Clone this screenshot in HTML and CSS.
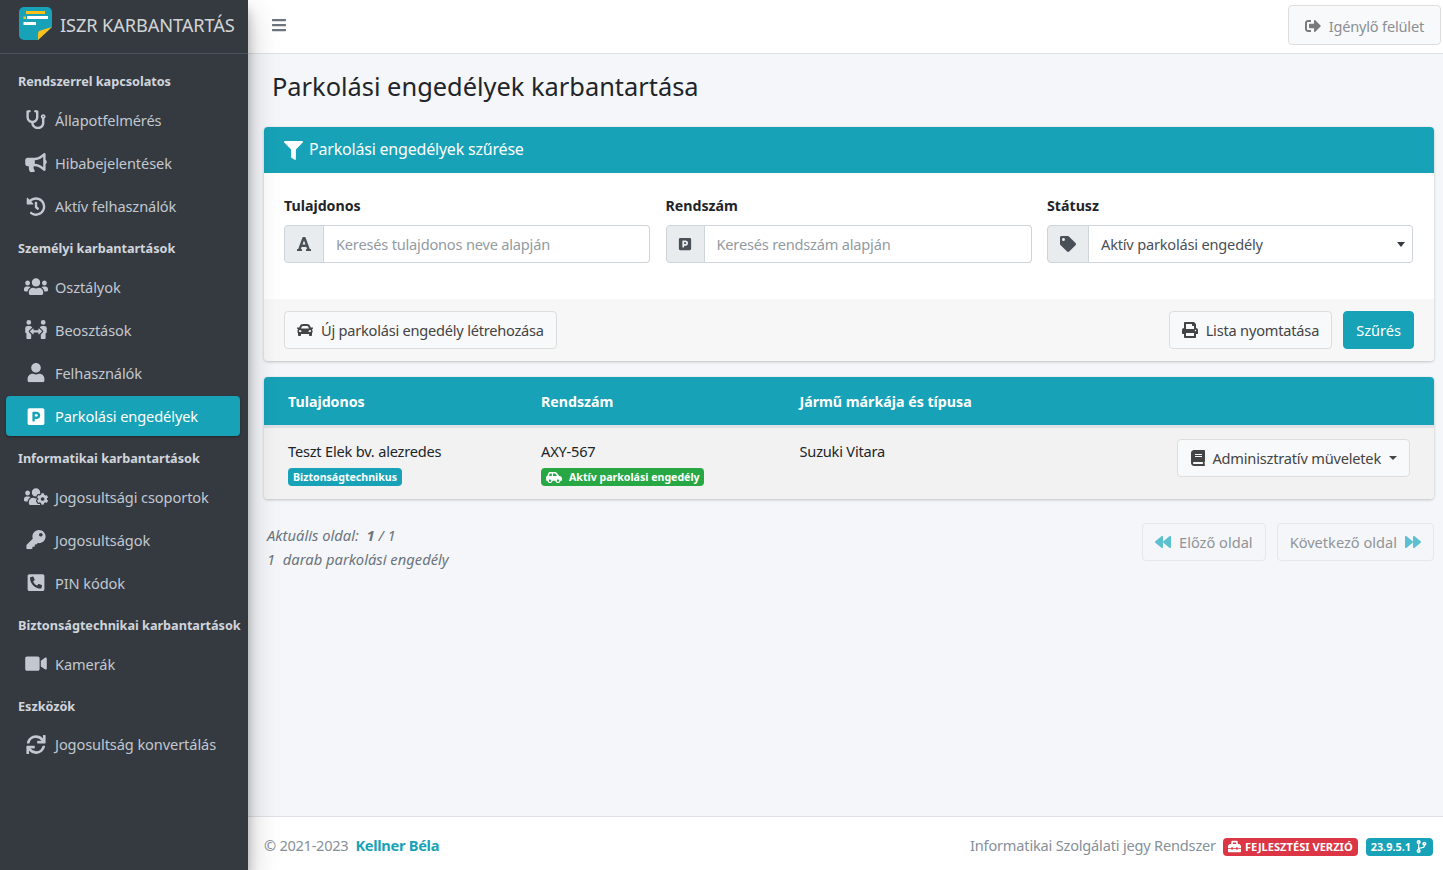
FILE: index.html
```html
<!DOCTYPE html>
<html lang="hu">
<head>
<meta charset="utf-8">
<title>Parkolási engedélyek karbantartása</title>
<link rel="stylesheet" href="styles.css">
</head>
<body>
<svg class="defs" xmlns="http://www.w3.org/2000/svg">
<symbol id="i-filter" viewBox="0 0 512 512"><path d="M487.976 0H24.028C2.71 0-8.047 25.866 7.058 40.971L192 225.941V432c0 7.831 3.821 15.17 10.237 19.662l80 55.98C298.02 518.69 320 507.493 320 487.98V225.941l184.947-184.97C520.021 25.896 509.338 0 487.976 0z"/></symbol>
<symbol id="i-bars" viewBox="0 0 448 512"><path d="M16 132h416c8.837 0 16-7.163 16-16V76c0-8.837-7.163-16-16-16H16C7.163 60 0 67.163 0 76v40c0 8.837 7.163 16 16 16zm0 160h416c8.837 0 16-7.163 16-16v-40c0-8.837-7.163-16-16-16H16c-8.837 0-16 7.163-16 16v40c0 8.837 7.163 16 16 16zm0 160h416c8.837 0 16-7.163 16-16v-40c0-8.837-7.163-16-16-16H16c-8.837 0-16 7.163-16 16v40c0 8.837 7.163 16 16 16z"/></symbol>
<symbol id="i-user" viewBox="0 0 448 512"><path d="M224 256c70.7 0 128-57.3 128-128S294.7 0 224 0 96 57.3 96 128s57.3 128 128 128zm89.6 32h-16.7c-22.2 10.2-46.9 16-72.9 16s-50.6-5.8-72.9-16h-16.7C60.2 288 0 348.2 0 422.4V464c0 26.5 21.5 48 48 48h352c26.5 0 48-21.5 48-48v-41.6c0-74.2-60.2-134.4-134.4-134.4z"/></symbol>
<symbol id="i-users" viewBox="0 0 640 512"><path d="M96 224c35.3 0 64-28.7 64-64s-28.7-64-64-64-64 28.7-64 64 28.7 64 64 64zm448 0c35.3 0 64-28.7 64-64s-28.7-64-64-64-64 28.7-64 64 28.7 64 64 64zm32 32h-64c-17.6 0-33.5 7.1-45.1 18.6 40.3 22.1 68.9 62 75.1 109.4h66c17.7 0 32-14.3 32-32v-32c0-35.3-28.7-64-64-64zm-256 0c61.9 0 112-50.1 112-112S381.9 32 320 32 208 82.1 208 144s50.1 112 112 112zm76.8 32h-8.3c-20.8 10-43.9 16-68.5 16s-47.6-6-68.5-16h-8.3C179.6 288 128 339.6 128 403.2V432c0 26.5 21.5 48 48 48h288c26.5 0 48-21.5 48-48v-28.8c0-63.6-51.6-115.2-115.2-115.2zm-223.7-13.4C161.5 263.1 145.6 256 128 256H64c-35.3 0-64 28.7-64 64v32c0 17.7 14.3 32 32 32h65.9c6.3-47.4 34.9-87.3 75.2-109.4z"/></symbol>
<symbol id="i-key" viewBox="0 0 512 512"><path d="M512 176.001C512 273.203 433.202 352 336 352c-11.22 0-22.19-1.062-32.827-3.069l-24.012 27.014A23.999 23.999 0 0 1 261.223 384H224v40c0 13.255-10.745 24-24 24h-40v40c0 13.255-10.745 24-24 24H24c-13.255 0-24-10.745-24-24v-78.059c0-6.365 2.529-12.47 7.029-16.971l161.802-161.802C163.108 213.814 160 195.271 160 176 160 78.798 238.797.001 335.999 0 433.488-.001 512 78.511 512 176.001zM336 128c0 26.51 21.49 48 48 48s48-21.49 48-48-21.49-48-48-48-48 21.49-48 48z"/></symbol>
<symbol id="i-phone" viewBox="0 0 448 512"><g transform="matrix(-1 0 0 1 448 0)"><path d="M400 32H48C21.49 32 0 53.49 0 80v352c0 26.51 21.49 48 48 48h352c26.51 0 48-21.49 48-48V80c0-26.51-21.49-48-48-48zM94 416c-7.033 0-13.057-4.873-14.616-11.627l-14.998-65a15 15 0 0 1 8.707-17.16l69.998-29.999a15 15 0 0 1 17.518 4.289l30.997 37.885c48.944-22.963 88.297-62.858 110.781-110.78l-37.886-30.997a15.001 15.001 0 0 1-4.289-17.518l30-69.998a15.001 15.001 0 0 1 17.16-8.707l65 14.998A14.997 14.997 0 0 1 384 126c0 160.292-129.945 290-290 290z"/></g></symbol>
<symbol id="i-video" viewBox="0 0 576 512"><path d="M336.2 64H47.8C21.4 64 0 85.4 0 111.8v288.4C0 426.6 21.4 448 47.8 448h288.4c26.4 0 47.8-21.4 47.8-47.8V111.8c0-26.4-21.4-47.8-47.8-47.8zm189.4 37.7L416 177.3v157.4l109.6 75.5c21.2 14.6 50.4-.3 50.4-25.8V127.5c0-25.4-29.1-40.4-50.4-25.8z"/></symbol>
<symbol id="i-sync" viewBox="0 0 512 512"><path d="M440.65 12.57l4 82.77A247.16 247.16 0 0 0 255.83 8C134.73 8 33.91 94.92 12.29 209.82A12 12 0 0 0 24.09 224h49.05a12 12 0 0 0 11.67-9.26 175.91 175.91 0 0 1 317-56.94l-101.46-4.86a12 12 0 0 0-12.57 12v47.41a12 12 0 0 0 12 12H500a12 12 0 0 0 12-12V12a12 12 0 0 0-12-12h-47.37a12 12 0 0 0-11.98 12.57zM255.83 432a175.61 175.61 0 0 1-146-77.8l101.8 4.87a12 12 0 0 0 12.57-12v-47.4a12 12 0 0 0-12-12H12a12 12 0 0 0-12 12V500a12 12 0 0 0 12 12h47.35a12 12 0 0 0 12-12.6l-4.15-82.57A247.17 247.17 0 0 0 255.83 504c121.11 0 221.93-86.92 243.55-201.82a12 12 0 0 0-11.8-14.18h-49.05a12 12 0 0 0-11.67 9.26A175.86 175.86 0 0 1 255.83 432z"/></symbol>
<symbol id="i-car" viewBox="0 0 512 512"><path d="M499.99 176h-59.87l-16.64-41.6C406.38 91.63 365.57 64 319.5 64h-127c-46.06 0-86.88 27.63-103.99 70.4L71.87 176H12.01C4.2 176-1.53 183.34.37 190.91l6 24C7.7 220.25 12.5 224 18.01 224h20.07C24.65 235.73 16 252.78 16 272v48c0 16.12 6.16 30.67 16 41.93V416c0 17.67 14.33 32 32 32h32c17.67 0 32-14.33 32-32v-32h256v32c0 17.67 14.33 32 32 32h32c17.67 0 32-14.33 32-32v-54.07c9.84-11.25 16-25.8 16-41.93v-48c0-19.22-8.65-36.27-22.07-48H494c5.51 0 10.31-3.75 11.64-9.09l6-24c1.89-7.57-3.84-14.91-11.65-14.91zm-352.06-17.83c7.29-18.22 24.94-30.17 44.57-30.17h127c19.63 0 37.28 11.95 44.57 30.17L384 208H128l19.93-49.83zM96 319.8c-19.2 0-32-12.76-32-31.9S76.8 256 96 256s48 28.71 48 47.85-28.8 15.95-48 15.95zm320 0c-19.2 0-48 3.19-48-15.95S396.8 256 416 256s32 12.76 32 31.9-12.8 31.9-32 31.9z"/></symbol>
<symbol id="i-carside" viewBox="0 0 640 512"><path d="M544 192h-16L419.22 56.02A64.025 64.025 0 0 0 369.24 32H155.33c-26.17 0-49.7 15.93-59.42 40.23L48 194.26C20.44 201.4 0 226.21 0 256v112c0 8.84 7.16 16 16 16h48c0 53.02 42.98 96 96 96s96-42.98 96-96h128c0 53.02 42.98 96 96 96s96-42.98 96-96h48c8.84 0 16-7.16 16-16v-80c0-53.02-42.98-96-96-96zM160 432c-26.47 0-48-21.53-48-48s21.53-48 48-48 48 21.53 48 48-21.53 48-48 48zm72-240H116.93l38.4-96H232v96zm48 0V96h89.24l76.8 96H280zm200 240c-26.47 0-48-21.53-48-48s21.53-48 48-48 48 21.53 48 48-21.53 48-48 48z"/></symbol>
<symbol id="i-print" viewBox="0 0 512 512"><path d="M448 192V77.25c0-8.49-3.37-16.62-9.37-22.63L393.37 9.37c-6-6-14.14-9.37-22.63-9.37H96C78.33 0 64 14.33 64 32v160c-35.35 0-64 28.65-64 64v112c0 8.84 7.16 16 16 16h48v96c0 17.67 14.33 32 32 32h320c17.67 0 32-14.33 32-32v-96h48c8.84 0 16-7.16 16-16V256c0-35.35-28.65-64-64-64zm-64 256H128v-96h256v96zm0-224H128V64h192v48c0 8.84 7.16 16 16 16h48v96zm48 72c-13.25 0-24-10.75-24-24 0-13.26 10.75-24 24-24s24 10.74 24 24c0 13.25-10.75 24-24 24z"/></symbol>
<symbol id="i-tag" viewBox="0 0 512 512"><path d="M0 252.118V48C0 21.49 21.49 0 48 0h204.118a48 48 0 0 1 33.941 14.059l211.882 211.882c18.745 18.745 18.745 49.137 0 67.882L293.823 497.941c-18.745 18.745-49.137 18.745-67.882 0L14.059 286.059A48 48 0 0 1 0 252.118zM112 64c-26.51 0-48 21.49-48 48s21.49 48 48 48 48-21.49 48-48-21.49-48-48-48z"/></symbol>
<symbol id="i-font" viewBox="0 0 448 512"><path d="M432 416h-23.41L277.88 53.69A32 32 0 0 0 247.58 32h-47.16a32 32 0 0 0-30.3 21.69L39.41 416H16a16 16 0 0 0-16 16v32a16 16 0 0 0 16 16h128a16 16 0 0 0 16-16v-32a16 16 0 0 0-16-16h-19.58l23.3-64h152.56l23.3 64H304a16 16 0 0 0-16 16v32a16 16 0 0 0 16 16h128a16 16 0 0 0 16-16v-32a16 16 0 0 0-16-16zM176.85 272L224 142.51 271.15 272z"/></symbol>
<symbol id="i-parking" viewBox="0 0 448 512"><path d="M400 32H48C21.5 32 0 53.5 0 80v352c0 26.5 21.5 48 48 48h352c26.5 0 48-21.5 48-48V80c0-26.5-21.5-48-48-48zM240 320h-48v48c0 8.8-7.2 16-16 16h-32c-8.8 0-16-7.2-16-16V144c0-8.8 7.2-16 16-16h96c52.9 0 96 43.1 96 96s-43.1 96-96 96zm0-128h-48v64h48c17.6 0 32-14.4 32-32s-14.4-32-32-32z"/></symbol>
<symbol id="i-book" viewBox="0 0 448 512"><path d="M448 360V24c0-13.3-10.7-24-24-24H96C43 0 0 43 0 96v320c0 53 43 96 96 96h328c13.3 0 24-10.7 24-24v-16c0-7.5-3.5-14.3-8.9-18.7-4.2-15.4-4.2-59.3 0-74.7 5.4-4.3 8.9-11.1 8.9-18.6zM128 134c0-3.3 2.7-6 6-6h212c3.3 0 6 2.7 6 6v20c0 3.3-2.7 6-6 6H134c-3.3 0-6-2.7-6-6v-20zm0 64c0-3.3 2.7-6 6-6h212c3.3 0 6 2.7 6 6v20c0 3.3-2.7 6-6 6H134c-3.3 0-6-2.7-6-6v-20zm253.4 250H96c-17.7 0-32-14.3-32-32 0-17.6 14.4-32 32-32h285.4c-1.9 17.1-1.9 46.9 0 64z"/></symbol>
<symbol id="i-backward" viewBox="0 0 512 512"><path d="M11.5 280.6l192 160c20.6 17.2 52.5 2.8 52.5-24.6V96c0-27.4-31.9-41.8-52.5-24.6l-192 160c-15.3 12.8-15.3 36.4 0 49.2zm256 0l192 160c20.6 17.2 52.5 2.8 52.5-24.6V96c0-27.4-31.9-41.8-52.5-24.6l-192 160c-15.3 12.8-15.3 36.4 0 49.2z"/></symbol>
<symbol id="i-forward" viewBox="0 0 512 512"><path d="M500.5 231.4l-192-160C287.9 54.3 256 68.6 256 96v320c0 27.4 31.9 41.8 52.5 24.6l192-160c15.3-12.8 15.3-36.4 0-49.2zm-256 0l-192-160C31.9 54.3 0 68.6 0 96v320c0 27.4 31.9 41.8 52.5 24.6l192-160c15.3-12.8 15.3-36.4 0-49.2z"/></symbol>
<symbol id="i-signout" viewBox="0 0 512 512"><path d="M497 273L329 441c-15 15-41 4.5-41-17v-96H152c-13.3 0-24-10.7-24-24v-96c0-13.3 10.7-24 24-24h136V88c0-21.4 25.9-32 41-17l168 168c9.3 9.4 9.3 24.6 0 34zM192 436v-40c0-6.6-5.4-12-12-12H96c-17.7 0-32-14.3-32-32V160c0-17.7 14.3-32 32-32h84c6.6 0 12-5.4 12-12V76c0-6.6-5.4-12-12-12H96c-53 0-96 43-96 96v192c0 53 43 96 96 96h84c6.6 0 12-5.4 12-12z"/></symbol>
<symbol id="i-bullhorn" viewBox="0 0 576 512"><path d="M576 240c0-23.63-12.95-44.04-32-55.12V32.01C544 23.26 537.02 0 512 0c-7.12 0-14.19 2.38-19.98 7.02l-85.03 68.03C364.28 109.19 310.66 128 256 128H64c-35.35 0-64 28.65-64 64v96c0 35.35 28.65 64 64 64h33.7c-1.39 10.48-2.18 21.14-2.18 32 0 39.77 9.26 77.35 25.56 110.94 5.19 10.69 16.52 17.06 28.4 17.06h74.28c26.05 0 41.69-29.84 25.9-50.56-16.4-21.52-26.15-48.36-26.15-77.44 0-11.11 1.62-21.79 4.41-32H256c54.66 0 108.28 18.81 150.98 52.95l85.03 68.03a32.023 32.023 0 0 0 19.98 7.02c24.92 0 32-22.78 32-32V295.13C563.05 284.04 576 263.63 576 240zm-96 141.42l-33.05-26.44C392.95 311.78 325.12 288 256 288v-96c69.12 0 136.95-23.78 190.95-66.98L480 98.58v282.84z"/></symbol>
<symbol id="i-history" viewBox="0 0 512 512"><path d="M504 255.531c.253 136.64-111.18 248.372-247.82 248.468-59.015.042-113.223-20.53-155.822-54.911-11.077-8.94-11.905-25.541-1.839-35.607l11.267-11.267c8.609-8.609 22.353-9.551 31.891-1.984C173.062 425.135 212.781 440 256 440c101.705 0 184-82.311 184-184 0-101.705-82.311-184-184-184-48.814 0-93.149 18.969-126.068 49.932l50.754 50.754c10.08 10.08 2.941 27.314-11.313 27.314H24c-8.837 0-16-7.163-16-16V38.627c0-14.254 17.234-21.393 27.314-11.314l49.372 49.372C129.209 34.136 189.552 8 256 8c136.81 0 247.747 110.78 248 247.531zm-180.912 78.784l9.823-12.63c8.138-10.463 6.253-25.542-4.21-33.679L288 256.349V152c0-13.255-10.745-24-24-24h-16c-13.255 0-24 10.745-24 24v135.651l65.409 50.874c10.463 8.137 25.541 6.253 33.679-4.21z"/></symbol>
<symbol id="i-steth" viewBox="0 0 512 512"><path d="M447.1 112c-34.2.5-62.3 28.4-63 62.6-.5 24.3 12.5 45.6 32 56.8V344c0 57.3-50.2 104-112 104-60 0-109.2-44.1-111.9-99.2C265 333.8 320 269.2 320 192V36.6c0-11.4-8.1-21.3-19.3-23.5L237.8.5c-13-2.6-25.6 5.8-28.2 18.8L206.4 35c-2.6 13 5.8 25.6 18.8 28.2l30.7 6.1v121.4c0 52.9-42.2 96.7-95.1 97.2-53.4.5-96.9-42.7-96.9-96V69.4l30.7-6.1c13-2.6 21.4-15.2 18.8-28.2l-3.1-15.7C107.7 6.4 95.1-2 82.1.6L19.3 13C8.1 15.3 0 25.1 0 36.6V192c0 77.3 55.1 142 128.1 156.8C130.7 439.2 208.6 512 304 512c97 0 176-75.4 176-168V231.4c19.1-11.1 32-31.7 32-55.4 0-35.7-29.2-64.5-64.9-64zm.9 80c-8.8 0-16-7.2-16-16s7.2-16 16-16 16 7.2 16 16-7.2 16-16 16z"/></symbol>
<symbol id="i-toolbox" viewBox="0 0 512 512"><path d="M502.63 214.63l-45.25-45.25c-6-6-14.14-9.37-22.63-9.37H384V80c0-26.51-21.49-48-48-48H176c-26.51 0-48 21.49-48 48v80H77.25c-8.49 0-16.62 3.37-22.63 9.37L9.37 214.63c-6 6-9.37 14.14-9.37 22.63V320h128v-16c0-8.84 7.16-16 16-16h32c8.84 0 16 7.16 16 16v16h128v-16c0-8.84 7.16-16 16-16h32c8.84 0 16 7.16 16 16v16h128v-82.75c0-8.48-3.37-16.62-9.37-22.62zM320 160H192V96h128v64zm64 208c0 8.84-7.16 16-16 16h-32c-8.84 0-16-7.16-16-16v-16H192v16c0 8.84-7.16 16-16 16h-32c-8.84 0-16-7.16-16-16v-16H0v96c0 17.67 14.33 32 32 32h448c17.67 0 32-14.33 32-32v-96H384v16z"/></symbol>
<symbol id="i-branch" viewBox="0 0 384 512"><path d="M384 144c0-44.2-35.8-80-80-80s-80 35.8-80 80c0 36.4 24.3 67.1 57.5 76.8-.6 16.1-4.2 28.5-11 36.9-15.4 19.2-49.3 22.4-85.2 25.7-28.2 2.6-57.4 5.4-81.3 16.9v-144c32.5-10.2 56-40.5 56-76.3 0-44.2-35.8-80-80-80S0 35.8 0 80c0 35.8 23.5 66.1 56 76.3v199.3C23.5 365.9 0 396.2 0 432c0 44.2 35.8 80 80 80s80-35.8 80-80c0-34-21.2-63.1-51.2-74.6 3.1-5.2 7.8-9.8 14.9-13.4 16.2-8.2 40.4-10.4 66.1-12.8 42.2-3.9 90-8.4 118.2-43.4 14-17.4 21.1-39.8 21.6-67.9 31.6-10.8 54.4-40.7 54.4-75.9zM80 64c8.8 0 16 7.2 16 16s-7.2 16-16 16-16-7.2-16-16 7.2-16 16-16zm0 384c-8.8 0-16-7.2-16-16s7.2-16 16-16 16 7.2 16 16-7.2 16-16 16zm224-320c8.8 0 16 7.2 16 16s-7.2 16-16 16-16-7.2-16-16 7.2-16 16-16z"/></symbol>
<symbol id="i-arrows" viewBox="0 0 576 512"><path d="M96,128A64,64,0,1,0,32,64,64,64,0,0,0,96,128Zm0,176.08a44.11,44.11,0,0,1,13.64-32L181.77,204c1.65-1.55,3.77-2.31,5.61-3.57A63.91,63.91,0,0,0,128,160H64A64,64,0,0,0,0,224v96a32,32,0,0,0,32,32V480a32,32,0,0,0,32,32h64a32,32,0,0,0,32-32V383.61l-50.36-47.53A44.08,44.08,0,0,1,96,304.08ZM480,128a64,64,0,1,0-64-64A64,64,0,0,0,480,128Zm32,32H448a63.91,63.91,0,0,0-59.38,40.42c1.84,1.27,4,2,5.62,3.59l72.12,68.06a44.37,44.37,0,0,1,0,64L416,383.62V480a32,32,0,0,0,32,32h64a32,32,0,0,0,32-32V352a32,32,0,0,0,32-32V224A64,64,0,0,0,512,160ZM444.4,295.34l-72.12-68.06A12,12,0,0,0,352,236v36H224V236a12,12,0,0,0-20.28-8.73L131.6,295.34a12.4,12.4,0,0,0,0,17.47l72.12,68.07A12,12,0,0,0,224,372.14V336H352v36.14a12,12,0,0,0,20.28,8.74l72.12-68.07A12.4,12.4,0,0,0,444.4,295.34Z"/></symbol>
<symbol id="i-userscog" viewBox="0 0 640 512"><path d="M610.5 341.3c2.6-14.1 2.6-28.5 0-42.6l25.8-14.9c3-1.7 4.3-5.2 3.3-8.5-6.7-21.6-18.2-41.2-33.2-57.4-2.3-2.5-6-3.1-9-1.4l-25.8 14.9c-10.9-9.3-23.4-16.5-36.9-21.3v-29.8c0-3.4-2.4-6.4-5.7-7.1-22.3-5-45-4.8-66.2 0-3.3.7-5.7 3.7-5.7 7.1v29.8c-13.5 4.8-26 12-36.9 21.3l-25.8-14.9c-2.9-1.7-6.7-1.1-9 1.4-15 16.2-26.5 35.8-33.2 57.4-1 3.3.4 6.8 3.3 8.5l25.8 14.9c-2.6 14.1-2.6 28.5 0 42.6l-25.8 14.9c-3 1.7-4.3 5.2-3.3 8.5 6.7 21.6 18.2 41.1 33.2 57.4 2.3 2.5 6 3.1 9 1.4l25.8-14.9c10.9 9.3 23.4 16.5 36.9 21.3v29.8c0 3.4 2.4 6.4 5.7 7.1 22.3 5 45 4.8 66.2 0 3.3-.7 5.7-3.7 5.7-7.1v-29.8c13.5-4.8 26-12 36.9-21.3l25.8 14.9c2.9 1.7 6.7 1.1 9-1.4 15-16.2 26.5-35.8 33.2-57.4 1-3.3-.4-6.8-3.3-8.5l-25.8-14.9zM496 368.5c-26.8 0-48.5-21.8-48.5-48.5s21.8-48.5 48.5-48.5 48.5 21.8 48.5 48.5-21.7 48.5-48.5 48.5zM96 224c35.3 0 64-28.7 64-64s-28.7-64-64-64-64 28.7-64 64 28.7 64 64 64zm224 32c1.9 0 3.7-.5 5.6-.6 8.3-21.7 20.5-42.1 36.3-59.2 7.4-8 17.9-12.6 28.9-12.6 6.9 0 13.7 1.8 19.6 5.3l7.9 4.6c.8-.5 1.6-.9 2.4-1.4 7-14.6 11.2-30.8 11.2-48 0-61.9-50.1-112-112-112S208 82.1 208 144c0 61.9 50.1 112 112 112zm105.2 194.5c-2.3-1.2-4.6-2.6-6.8-3.9-8.2 4.8-15.3 9.8-27.5 9.8-10.9 0-21.4-4.6-28.9-12.6-18.3-19.8-32.3-43.9-40.2-69.6-10.7-34.5 24.9-49.7 25.8-50.3-.1-2.6-.1-5.2 0-7.8l-7.9-4.6c-3.8-2.2-7-5-9.8-8.1-3.3.2-6.5.6-9.8.6-24.6 0-47.6-6-68.5-16h-8.3C179.6 288 128 339.6 128 403.2V432c0 26.5 21.5 48 48 48h255.4c-3.7-6-6.2-12.8-6.2-20.3v-9.2zM173.1 274.6C161.5 263.1 145.6 256 128 256H64c-35.3 0-64 28.7-64 64v32c0 17.7 14.3 32 32 32h65.9c6.3-47.4 34.9-87.3 75.2-109.4z"/></symbol>
</svg>

<aside class="sidebar">
  <a class="brand" href="#">
    <svg class="logo" viewBox="0 0 33 33" xmlns="http://www.w3.org/2000/svg">
      <path d="M5 0h23a5 5 0 0 1 5 5v15L19 33H5a5 5 0 0 1-5-5V5a5 5 0 0 1 5-5z" fill="#17a2b8"/>
      <path d="M33 20L19 33V26.500Q19 24 21.500 23.400Z" fill="#fdbf1c"/>
      <rect x="7" y="4" width="19" height="3" fill="#fdbf1c"/>
      <rect x="8" y="9" width="21" height="3" fill="#fff"/>
      <rect x="4.500" y="9.500" width="2.500" height="2.500" fill="#fdbf1c"/>
      <rect x="4.500" y="15" width="12.500" height="3" fill="#fff"/>
    </svg>
    <span class="brand-text">ISZR KARBANTARTÁS</span>
  </a>
  <nav class="nav">
    <div class="nav-header">Rendszerrel kapcsolatos</div>
    <a class="nav-link" href="#"><span class="nav-icon"><svg class="ic-nav"><use href="#i-steth"/></svg></span><span>Állapotfelmérés</span></a>
    <a class="nav-link" href="#"><span class="nav-icon"><svg class="ic-nav"><use href="#i-bullhorn"/></svg></span><span>Hibabejelentések</span></a>
    <a class="nav-link" href="#"><span class="nav-icon"><svg class="ic-nav"><use href="#i-history"/></svg></span><span>Aktív felhasználók</span></a>
    <div class="nav-header">Személyi karbantartások</div>
    <a class="nav-link" href="#"><span class="nav-icon"><svg class="ic-nav"><use href="#i-users"/></svg></span><span>Osztályok</span></a>
    <a class="nav-link" href="#"><span class="nav-icon"><svg class="ic-nav"><use href="#i-arrows"/></svg></span><span>Beosztások</span></a>
    <a class="nav-link" href="#"><span class="nav-icon"><svg class="ic-nav"><use href="#i-user"/></svg></span><span>Felhasználók</span></a>
    <a class="nav-link active" href="#"><span class="nav-icon"><svg class="ic-nav"><use href="#i-parking"/></svg></span><span>Parkolási engedélyek</span></a>
    <div class="nav-header">Informatikai karbantartások</div>
    <a class="nav-link" href="#"><span class="nav-icon"><svg class="ic-nav"><use href="#i-userscog"/></svg></span><span>Jogosultsági csoportok</span></a>
    <a class="nav-link" href="#"><span class="nav-icon"><svg class="ic-nav"><use href="#i-key"/></svg></span><span>Jogosultságok</span></a>
    <a class="nav-link" href="#"><span class="nav-icon"><svg class="ic-nav"><use href="#i-phone"/></svg></span><span>PIN kódok</span></a>
    <div class="nav-header">Biztonságtechnikai karbantartások</div>
    <a class="nav-link" href="#"><span class="nav-icon"><svg class="ic-nav"><use href="#i-video"/></svg></span><span>Kamerák</span></a>
    <div class="nav-header">Eszközök</div>
    <a class="nav-link" href="#"><span class="nav-icon"><svg class="ic-nav"><use href="#i-sync"/></svg></span><span>Jogosultság konvertálás</span></a>
  </nav>
</aside>

<div class="wrapper">
  <header class="topbar">
    <a class="burger" href="#"><svg class="ic-16"><use href="#i-bars"/></svg></a>
    <a class="btn btn-top" href="#"><svg class="ic-16"><use href="#i-signout"/></svg><span>Igénylő felület</span></a>
  </header>

  <main class="content">
    <h1 class="page-title">Parkolási engedélyek karbantartása</h1>

    <section class="card">
      <div class="card-head"><svg class="ic-19"><use href="#i-filter"/></svg><span class="card-title">Parkolási engedélyek szűrése</span></div>
      <div class="card-body">
        <div class="field">
          <label class="field-label">Tulajdonos</label>
          <div class="input-group">
            <span class="addon"><svg class="ic-16"><use href="#i-font"/></svg></span>
            <input class="control" type="text" placeholder="Keresés tulajdonos neve alapján">
          </div>
        </div>
        <div class="field">
          <label class="field-label">Rendszám</label>
          <div class="input-group">
            <span class="addon addon-p"><svg class="ic-14"><use href="#i-parking"/></svg></span>
            <input class="control" type="text" placeholder="Keresés rendszám alapján">
          </div>
        </div>
        <div class="field">
          <label class="field-label">Státusz</label>
          <div class="input-group">
            <span class="addon addon-tag"><svg class="ic-16"><use href="#i-tag"/></svg></span>
            <div class="select-wrap">
              <select class="control select"><option>Aktív parkolási engedély</option></select>
            </div>
          </div>
        </div>
      </div>
      <div class="card-foot">
        <a class="btn btn-new" href="#"><svg class="ic-16"><use href="#i-car"/></svg><span>Új parkolási engedély létrehozása</span></a>
        <div class="foot-actions">
          <a class="btn" href="#"><svg class="ic-16"><use href="#i-print"/></svg><span>Lista nyomtatása</span></a>
          <a class="btn btn-info" href="#">Szűrés</a>
        </div>
      </div>
    </section>

    <section class="card">
      <table class="table">
        <thead>
          <tr><th class="col-a">Tulajdonos</th><th class="col-b">Rendszám</th><th>Jármű márkája és típusa</th><th class="col-d"></th></tr>
        </thead>
        <tbody>
          <tr>
            <td>
              <div class="cell-text">Teszt Elek bv. alezredes</div>
              <span class="badge badge-info">Biztonságtechnikus</span>
            </td>
            <td>
              <div class="cell-text">AXY-567</div>
              <span class="badge badge-success"><svg class="ic-carside"><use href="#i-carside"/></svg>Aktív parkolási engedély</span>
            </td>
            <td><div class="cell-text">Suzuki Vitara</div></td>
            <td class="cell-right"><a class="btn btn-drop" href="#"><svg class="ic-16"><use href="#i-book"/></svg><span>Adminisztratív müveletek</span><i class="caret"></i></a></td>
          </tr>
        </tbody>
      </table>
    </section>

    <div class="pager">
      <div class="pager-info">
        <div>Aktuális oldal:&nbsp; <b>1</b> / 1</div>
        <div>1&nbsp; darab parkolási engedély</div>
      </div>
      <div class="pager-btns">
        <a class="btn btn-off" href="#"><svg class="ic-16 teal"><use href="#i-backward"/></svg><span>Előző oldal</span></a>
        <a class="btn btn-off" href="#"><span>Következő oldal</span><svg class="ic-16 teal"><use href="#i-forward"/></svg></a>
      </div>
    </div>
  </main>

  <footer class="footer">
    <div class="copy">© 2021-2023&nbsp; <a class="author" href="#">Kellner Béla</a></div>
    <div class="footer-right">
      <span>Informatikai Szolgálati jegy Rendszer</span>
      <span class="badge badge-danger"><svg class="ic-13"><use href="#i-toolbox"/></svg>FEJLESZTÉSI VERZIÓ</span>
      <span class="badge badge-info badge-ver">23.9.5.1<svg class="ic-13"><use href="#i-branch"/></svg></span>
    </div>
  </footer>
</div>
</body>
</html>
```

FILE: styles.css
```css
* { box-sizing: border-box; }
html, body { height: 100%; }
body {
  margin: 0;
  display: flex;
  height: 870px;
  overflow: hidden;
  background: #f4f6f9;
  color: #212529;
  font-family: "Noto Sans", "Open Sans", sans-serif;
  font-size: 14.6px;
  line-height: 24px;
  letter-spacing: -.2px;
}
a { text-decoration: none; color: inherit; }
svg { fill: currentColor; flex: none; display: block; }
.defs { display: none; }
.ic-13 { width: 13px; height: 13px; }
.ic-14 { width: 14px; height: 14px; }
.ic-16 { width: 16px; height: 16px; }
.ic-19 { width: 19px; height: 19px; }
.ic-nav { width: 24px; height: 19.200px; }
.ic-carside { width: 16px; height: 13px; }

.sidebar {
  width: 248px;
  flex: none;
  background: #343a40;
  box-shadow: 0 14px 28px rgba(0,0,0,.25), 0 10px 10px rgba(0,0,0,.22);
  position: relative;
  z-index: 2;
}
.brand {
  display: flex;
  align-items: center;
  height: 54px;
  padding: 0 0 6px 19px;
  border-bottom: 1px solid #4b545c;
}
.logo { width: 33px; height: 33px; }
.brand-text {
  margin: 2px 0 0 8px;
  font-size: 18.200px;
  letter-spacing: -.1px;
  color: rgba(255,255,255,.8);
  white-space: nowrap;
}
.nav { padding: 8.400px 8px 0 6px; }
.nav-header {
  height: 37.600px;
  display: flex;
  align-items: center;
  padding-left: 12px;
  font-size: 12.700px;
  font-weight: 700;
  letter-spacing: -.03px;
  color: #d0d4db;
  white-space: nowrap;
}
.nav-link {
  display: flex;
  align-items: center;
  height: 40px;
  margin-bottom: 3.100px;
  border-radius: 4px;
  color: #c2c7d0;
  letter-spacing: -.1px;
}
.nav-icon {
  width: 49px;
  padding: 0 7px 0 18px;
  height: 24px;
  display: flex;
  align-items: center;
  justify-content: center;
}
.nav-link.active {
  background: #17a2b8;
  color: #fff;
  box-shadow: 0 1px 3px rgba(0,0,0,.12), 0 1px 2px rgba(0,0,0,.24);
}

.wrapper {
  flex: 1;
  min-width: 0;
  display: flex;
  flex-direction: column;
}
.topbar {
  height: 54px;
  flex: none;
  display: flex;
  align-items: center;
  justify-content: space-between;
  padding: 0 2px 4px 23px;
  background: #fff;
  border-bottom: 1px solid #dee2e6;
}
.burger { color: #6c757d; display: flex; }
.content {
  flex: 1;
  padding: 0 9px 0 16px;
}
.page-title {
  margin: 0;
  height: 73px;
  padding: 13px 0 0 8px;
  font-size: 25.400px;
  font-weight: 400;
  line-height: 38px;
  letter-spacing: 0;
  color: #212529;
}

.btn {
  display: inline-flex;
  align-items: center;
  height: 38px;
  padding: 0 12px;
  gap: 8px;
  background: #f8f9fa;
  border: 1px solid #ddd;
  border-radius: 4px;
  color: #444;
  white-space: nowrap;
}
.btn-new { letter-spacing: -.23px; }
.btn-top { height: 40px; padding: 2px 16px 0; color: #8b8f94; }
.btn-top svg { color: #7a7a7a; }
.btn-info { background: #17a2b8; border-color: #17a2b8; color: #fff; letter-spacing: 0; }
.btn-off { color: #909498; border-color: #e6e7e9; background: #f5f6f9; letter-spacing: 0; }
.teal { color: #5cc0d0; }

.card {
  background: #fff;
  border-radius: 4px;
  margin-bottom: 16px;
  overflow: hidden;
  box-shadow: 0 0 1px rgba(0,0,0,.125), 0 1px 3px rgba(0,0,0,.2);
}
.card-head {
  height: 46px;
  display: flex;
  align-items: center;
  gap: 6px;
  padding: 0 20px;
  background: #17a2b8;
  color: #fff;
  font-size: 16px;
}
.card-title { margin-bottom: 2px; }
.card-body {
  height: 126px;
  padding: 20px 21px 20px 20px;
  display: grid;
  grid-template-columns: repeat(3, 1fr);
  gap: 15.500px;
}
.field-label {
  display: block;
  height: 24px;
  margin-bottom: 8px;
  padding-top: 1px;
  font-weight: 700;
  font-size: 14.200px;
  letter-spacing: 0;
  color: #212529;
}
.input-group { display: flex; height: 38px; }
.addon {
  width: 40px;
  flex: none;
  display: flex;
  align-items: center;
  justify-content: center;
  background: #e9ecef;
  border: 1px solid #ced4da;
  border-radius: 4px 0 0 4px;
  color: #495057;
}
.addon-p { width: 39px; }
.addon-tag { width: 42px; }
.control {
  flex: 1;
  width: 100%;
  min-width: 0;
  height: 38px;
  padding: 0 12px;
  border: 1px solid #ced4da;
  border-left: 0;
  border-radius: 0 4px 4px 0;
  background: #fff;
  color: #495057;
  font: inherit;
  letter-spacing: inherit;
}
.control::placeholder { color: #939ba2; opacity: 1; }
.select-wrap { flex: 1; position: relative; }
.select { appearance: none; display: block; }
.select-wrap::after {
  content: "";
  position: absolute;
  right: 8px;
  top: 17px;
  border-left: 4.500px solid transparent;
  border-right: 4.500px solid transparent;
  border-top: 5px solid #343a40;
}
.card-foot {
  height: 62px;
  display: flex;
  align-items: center;
  justify-content: space-between;
  padding: 0 20px;
  background: #f7f7f7;
}
.foot-actions { display: flex; gap: 11px; }

.table {
  width: 100%;
  border-collapse: separate;
  border-spacing: 0;
  table-layout: fixed;
}
.table th {
  height: 51px;
  padding: 2px 0 0 24px;
  background: #17a2b8;
  color: #fff;
  text-align: left;
  font-size: 14.200px;
  font-weight: 700;
  letter-spacing: 0;
  border-bottom: 3px solid #dee2e6;
}
.col-a { width: 253px; }
.col-b { width: 258.500px; }
.col-d { width: 300px; }
.table td {
  padding: 11px 0 13px 24px;
  vertical-align: top;
  background: #f2f2f2;
}
.table td.cell-right { padding-right: 24px; text-align: right; }
.cell-text { height: 24px; margin-bottom: 5px; color: #212529; }
.badge {
  display: inline-flex;
  align-items: center;
  height: 18px;
  padding: 0 5px;
  border-radius: 4px;
  font-size: 10.600px;
  line-height: 18px;
  font-weight: 700;
  letter-spacing: 0;
  color: #fff;
  white-space: nowrap;
}
.table .badge { display: flex; width: fit-content; }
.badge-info { background: #17a2b8; }
.badge-success { background: #28a745; gap: 7px; padding-right: 4px; }
.badge-danger { background: #dc3545; gap: 4px; }
.btn-drop { gap: 6px; }
.caret {
  margin-left: 2px;
  border-left: 4.500px solid transparent;
  border-right: 4.500px solid transparent;
  border-top: 4.500px solid #444;
}

.pager {
  display: flex;
  justify-content: space-between;
  padding-left: 3px;
  margin-top: 24px;
}
.pager-info { font-style: italic; font-size: 14.750px; letter-spacing: 0; color: #6c757d; }
.pager-btns { display: flex; gap: 11px; }

.footer {
  height: 54px;
  flex: none;
  display: flex;
  align-items: center;
  justify-content: space-between;
  padding: 2px 10px 0 16px;
  background: #fff;
  border-top: 1px solid #dee2e6;
  color: #869099;
}
.copy { letter-spacing: -.28px; }
.author { color: #17a2b8; font-weight: 700; }
.footer-right { display: flex; align-items: center; gap: 7px; }
.footer .badge { font-size: 11.100px; margin-top: 4px; }
.footer .badge-ver { font-size: 10.900px; gap: 4px; margin-left: 1px; }
```
